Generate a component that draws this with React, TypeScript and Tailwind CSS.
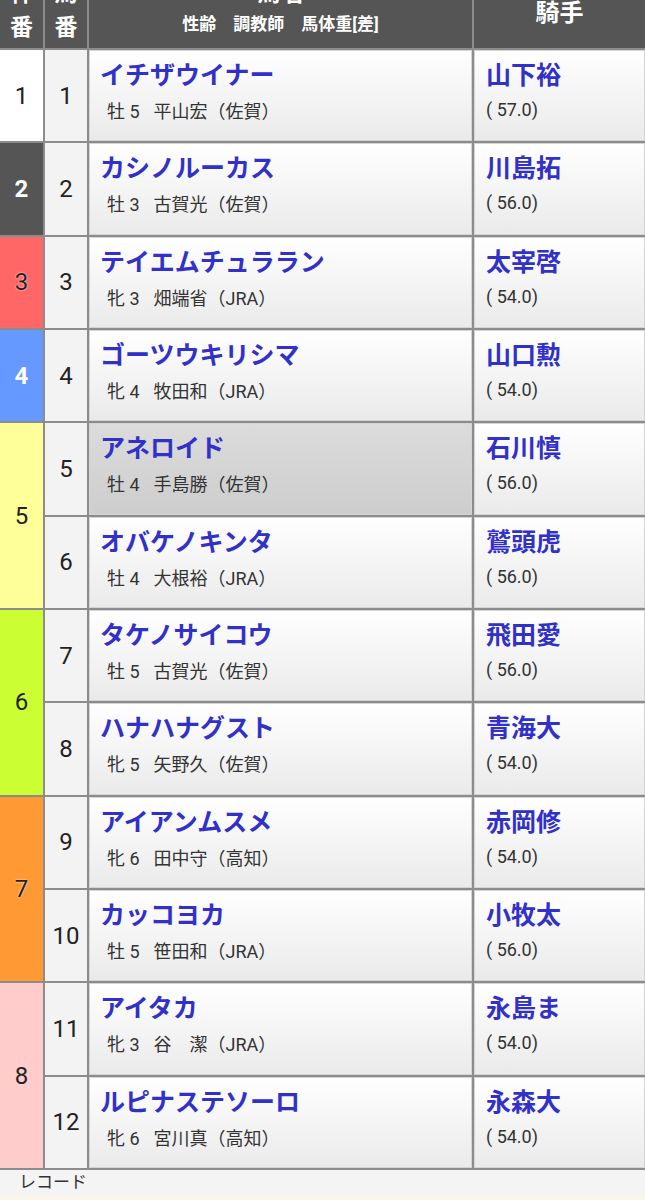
const font = "font-['Roboto','Noto_Sans_CJK_JP',sans-serif]";

type Horse = {
	no: number;
	name: string;
	sex: string;
	age: number;
	trainer: string;
	jockey: string;
	weight: string;
	hot?: boolean;
};

type Waku = { waku: number; cls: string; horses: Horse[] };

const wakus: Waku[] = [
	{
		waku: 1,
		cls: "bg-white text-[#222]",
		horses: [{ no: 1, name: "イチザウイナー", sex: "牡", age: 5, trainer: "平山宏（佐賀）", jockey: "山下裕", weight: "57.0" }],
	},
	{
		waku: 2,
		cls: "bg-[#555555] text-white font-bold",
		horses: [{ no: 2, name: "カシノルーカス", sex: "牡", age: 3, trainer: "古賀光（佐賀）", jockey: "川島拓", weight: "56.0" }],
	},
	{
		waku: 3,
		cls: "bg-[#ff6666] text-[#222] [text-shadow:0_0_2px_#fff]",
		horses: [{ no: 3, name: "テイエムチュララン", sex: "牝", age: 3, trainer: "畑端省（JRA）", jockey: "太宰啓", weight: "54.0" }],
	},
	{
		waku: 4,
		cls: "bg-[#6699ff] text-white font-bold",
		horses: [{ no: 4, name: "ゴーツウキリシマ", sex: "牝", age: 4, trainer: "牧田和（JRA）", jockey: "山口勲", weight: "54.0" }],
	},
	{
		waku: 5,
		cls: "bg-[#ffff99] text-[#222]",
		horses: [
			{ no: 5, name: "アネロイド", sex: "牡", age: 4, trainer: "手島勝（佐賀）", jockey: "石川慎", weight: "56.0", hot: true },
			{ no: 6, name: "オバケノキンタ", sex: "牡", age: 4, trainer: "大根裕（JRA）", jockey: "鷲頭虎", weight: "56.0" },
		],
	},
	{
		waku: 6,
		cls: "bg-[#ccff33] text-[#222]",
		horses: [
			{ no: 7, name: "タケノサイコウ", sex: "牡", age: 5, trainer: "古賀光（佐賀）", jockey: "飛田愛", weight: "56.0" },
			{ no: 8, name: "ハナハナグスト", sex: "牝", age: 5, trainer: "矢野久（佐賀）", jockey: "青海大", weight: "54.0" },
		],
	},
	{
		waku: 7,
		cls: "bg-[#ff9933] text-[#222] [text-shadow:0_0_2px_#fff]",
		horses: [
			{ no: 9, name: "アイアンムスメ", sex: "牝", age: 6, trainer: "田中守（高知）", jockey: "赤岡修", weight: "54.0" },
			{ no: 10, name: "カッコヨカ", sex: "牡", age: 5, trainer: "笹田和（JRA）", jockey: "小牧太", weight: "56.0" },
		],
	},
	{
		waku: 8,
		cls: "bg-[#ffcccc] text-[#222]",
		horses: [
			{ no: 11, name: "アイタカ", sex: "牝", age: 3, trainer: "谷　潔（JRA）", jockey: "永島ま", weight: "54.0" },
			{ no: 12, name: "ルピナステソーロ", sex: "牝", age: 6, trainer: "宮川真（高知）", jockey: "永森大", weight: "54.0" },
		],
	},
];

const spans: Record<number, string> = { 1: "row-span-1", 2: "row-span-2" };

function HorseRow({ h }: { h: Horse }) {
	return (
		<>
			<div className="flex items-center justify-center bg-[#f3f3f3] text-[24px] text-[#222]">{h.no}</div>
			<div
				className={
					"pl-[11px] pt-[10px] shadow-[inset_0_0_0_1px_#d4d4d4] " +
					(h.hot ? "bg-linear-to-b from-[#dcdcdc] to-[#cdcdcd]" : "bg-linear-to-b from-white to-[#eaeaea]")
				}
			>
				<div className="text-[25px] font-bold leading-[32px] text-[#3131c9] whitespace-nowrap">{h.name}</div>
				<div className="mt-[8px] pl-[7px] text-[18px] leading-[24px] text-[#333] whitespace-nowrap">
					{h.sex} {h.age}
					<span className="ml-[14px]">{h.trainer}</span>
				</div>
			</div>
			<div className="pl-[12px] pt-[10px] bg-linear-to-b from-white to-[#eaeaea] shadow-[inset_0_0_0_1px_#d4d4d4]">
				<div className="text-[25px] font-bold leading-[32px] text-[#3131c9]">{h.jockey}</div>
				<div className="mt-[6px] text-[18px] leading-[24px] text-[#333]">( {h.weight})</div>
			</div>
		</>
	);
}

export default function App() {
	return (
		<div className={`w-[645px] h-[1200px] overflow-hidden bg-[#faf6ea] ${font}`}>
			<div className="-mt-[26px] grid grid-cols-[43px_42px_383px_1fr] grid-rows-[74px_repeat(12,91.33px)] gap-[2px] bg-[#8c8c8c] pb-[2px]">
				{/* header */}
				<div className="flex flex-col items-center justify-end bg-[#555555] pb-[8px] text-[23px] font-bold leading-[24px] text-white">
					<div className="mb-[10px]">枠</div>
					<div>番</div>
				</div>
				<div className="flex flex-col items-center justify-end bg-[#555555] pb-[8px] text-[23px] font-bold leading-[24px] text-white">
					<div className="mb-[10px]">馬</div>
					<div>番</div>
				</div>
				<div className="flex flex-col items-center justify-end bg-[#555555] pb-[13px] font-bold text-white">
					<div className="mb-[8px] text-[23px] leading-[22px]">馬名</div>
					<div className="text-[17px] leading-[22px] whitespace-pre">性齢　調教師　馬体重[差]</div>
				</div>
				<div className="flex items-center justify-center bg-[#555555] pt-[4px] text-[24px] font-bold text-white">騎手</div>

				{wakus.map((w) => (
					<div key={w.waku} className="contents">
						<div
							className={`col-start-1 flex items-center justify-center text-[24px] ${spans[w.horses.length]} ${w.cls}`}
						>
							{w.waku}
						</div>
						{w.horses.map((h) => (
							<HorseRow key={h.no} h={h} />
						))}
					</div>
				))}
			</div>
			<div className="h-[25px] bg-[#f4f4f4] pl-[19px] text-[17px] leading-[25px] text-[#333]">レコード</div>
		</div>
	);
}
